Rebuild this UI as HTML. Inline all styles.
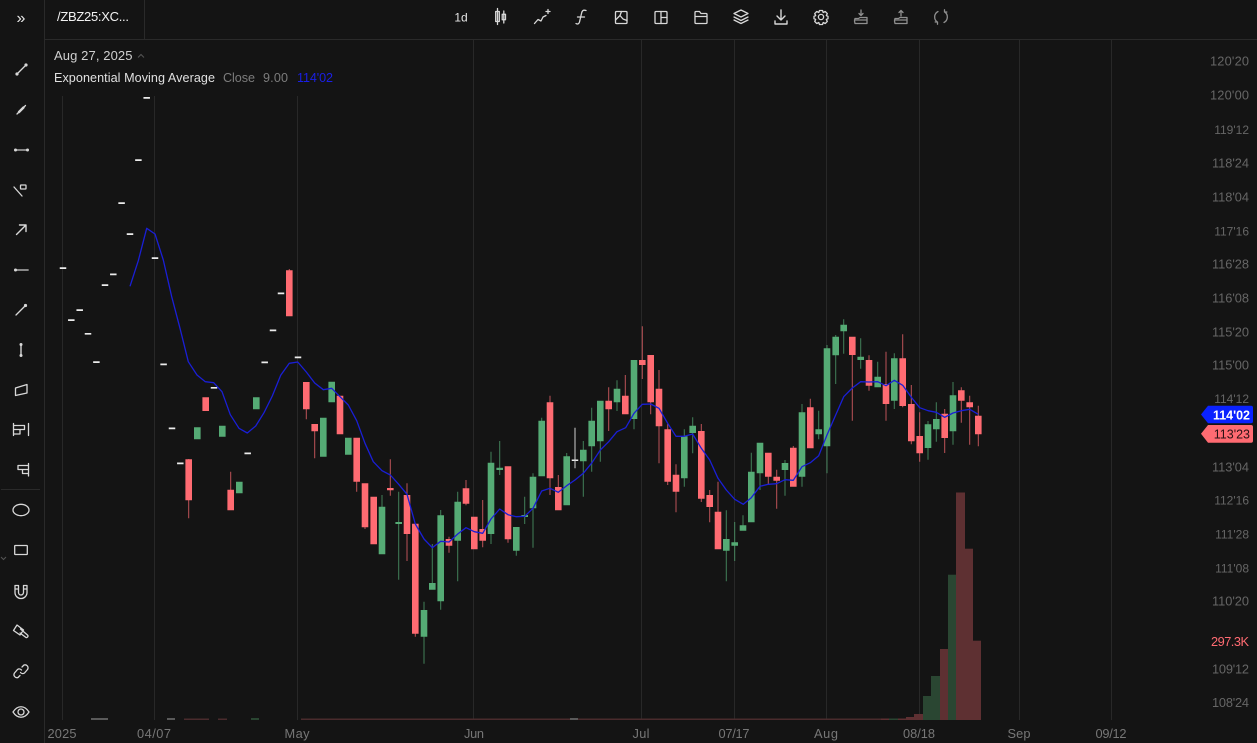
<!DOCTYPE html>
<html lang="en">
<head>
<meta charset="utf-8">
<title>Chart</title>
<style>
html,body{margin:0;padding:0;background:#141414;width:1257px;height:743px;overflow:hidden}
svg{display:block;font-family:"Liberation Sans",sans-serif}
.ax{font-size:12.8px;fill:#666;text-anchor:end}
.ax .n{font-size:12px}
.bx{font-size:12.8px;fill:#777;text-anchor:middle}
.ic{fill:none;stroke:#d8d8d8;stroke-width:1.3;stroke-linecap:round;stroke-linejoin:round}
.dim{stroke:#8f8f8f}
.dot{fill:#d8d8d8;stroke:none}
</style>
</head>
<body>
<svg width="1257" height="743" viewBox="0 0 1257 743" xmlns="http://www.w3.org/2000/svg">
<rect width="1257" height="743" fill="#141414"/>

<!-- frame -->
<path d="M44.5 0V743M44 39.5H1257M144.5 0V39" stroke="#2a2a2a" fill="none"/>
<path d="M1 489.5H40" stroke="#2a2a2a"/>

<!-- grid -->
<path d="M62.5 96V720M154.5 96V720M297.5 96V720M473.5 40V720M641.5 40V720M734.5 40V720M826.5 40V720M919.5 40V720M1019.5 40V720M1111.5 40V720" stroke="#282828" fill="none"/>

<!-- volume -->
<g fill="#5e3032">
<rect x="880" y="718.5" width="9" height="1.5"/><rect x="898" y="718.5" width="8" height="1.5"/><rect x="906" y="717" width="9" height="3"/><rect x="914" y="714" width="9" height="6"/>
<rect x="940" y="649" width="8" height="71"/><rect x="956" y="492.5" width="9" height="227.5"/><rect x="965" y="548.7" width="8" height="171.3"/><rect x="973" y="640.7" width="8" height="79.3"/>
</g>
<g fill="#2a4632">
<rect x="889" y="718.5" width="9" height="1.5"/><rect x="923" y="696" width="8" height="24"/><rect x="931" y="676" width="9" height="44"/><rect x="948" y="574.7" width="8" height="145.3"/>
</g>
<rect x="301" y="718.5" width="580" height="1.5" fill="#4a2b2d"/>
<g fill="#5a5a5a"><rect x="91" y="718" width="17" height="2"/><rect x="167" y="718" width="8" height="2"/><rect x="570" y="718" width="8" height="2"/></g>
<g fill="#4a2b2d"><rect x="184" y="718.5" width="25" height="1.5"/><rect x="218" y="718.5" width="9" height="1.5"/></g>
<g fill="#2a4632"><rect x="251" y="718" width="8" height="2"/></g>

<!-- dashes / doji white -->
<path stroke="#ececec" stroke-width="6.5" fill="none" d="M63 267.3V269M71.3 319.3V321M79.7 309.3V311M88 333V334.6M96.4 361.2V363M105 284.3V286M113.3 273.5V275.2M121.6 202.3V204M130 233.2V235M138.4 159.2V161M146.7 97V98.7M155 257.2V259M163.6 363.5V365.2M172 427.5V429.2M180.3 462.5V464.2M214 387V388.6M247.7 452.5V454.2M264.7 361.5V363.2M273 329.5V331.2M281 292.5V294.2M298 356.5V358.2M575 459.5V461"/>
<path stroke="#d0d0d0" stroke-width="1" fill="none" d="M575 427.7V468.3"/>

<!-- wicks red -->
<path stroke="#ff6b72" stroke-opacity=".72" stroke-width="1" fill="none" d="M188.7 459V518.3M230.7 471.7V510M289.3 269V316M306.3 382V419.3M314.7 424V458.3M356.7 438V491.7M365 484V529M390.3 459.3V495.7M407 483.3V561M415.3 524V636.7M449 536.7V552.7M466 480V505.3M482.7 500V547.3M508 467V542.7M550 395.7V495M558.3 475V510M608.7 387.3V431M625.3 375V414M642.3 326.3V379M650.7 355V414.3M659 370V463.3M667.7 424V485M676 464.3V512.3M701.3 424V502M709.7 490V522.3M718 481.7V549M768.3 453V485M776.7 469.7V508.7M793.3 446V486M810.3 398.7V448M852.3 337V420.7M869 355.3V390.7M886 351.7V420.7M902.7 334.3V407.3M911.3 385V444.3M919.7 412.3V461.7M944.7 409V453M961.3 387.3V422.7M969.7 395.7V444.7M978.3 405.7V446.3"/>
<!-- wicks green -->
<path stroke="#55ab75" stroke-opacity=".72" stroke-width="1" fill="none" d="M382 495V554M398.7 491.7V579.7M424 601.7V663.7M432.3 544V589M440.7 510V609.7M457.7 491.7V581.3M491 451.7V544M499.7 441V475M516.3 527V555.7M524.7 496.7V524M533 473.3V547.7M541.7 417.7V476M566.7 453V505M583.3 441V496.7M591.7 407.7V471.7M600.3 401V461.7M617 380.3V411M634 360V429.3M684.3 429.3V486.7M692.7 417.3V453.3M726.3 510.3V581.3M734.7 522V561M743 515.3V530M751.3 452.7V522M760 443V490M785 460V495.7M802 404V486.7M818.7 410.7V439.3M827 345V473.3M835.7 335V384M843.7 319.3V353.7M860.7 338.3V368.7M877.7 361.7V387M894.3 353.3V409M928 421V459.7M936.3 402.3V441.7M953 382V444.7"/>

<!-- bodies red -->
<path stroke="#ff6b72" stroke-width="6.6" fill="none" d="M188.7 459.3V500.3M205.7 397.3V411M230.7 489.7V510.3M289.3 270.3V316.3M306.3 382V409.3M314.7 424V431.3M340 395.7V434.3M356.7 437.7V481.7M365 483.3V527.3M373.7 496.7V544.3M390.3 488V490.3M407 495V534M415.3 523.7V633.7M449 539V545.7M466 488.3V503.7M474.3 516.7V549.3M482.7 529V540.7M508 466.3V539.3M550 402.3V478.3M558.3 487V510.3M608.7 400.7V409.3M625.3 395.7V414.3M642.3 360V365M650.7 355V402.3M659 388.7V426.3M667.7 429.3V481.7M676 474.7V491.7M701.3 431V498.7M709.7 495V507M718 511.7V549.3M768.3 452.7V476.7M776.7 476.7V480.7M793.3 447.7V486.7M810.3 407.3V448.3M852.3 336.7V355M869 360V385.7M886 384V404M902.7 358.3V406M911.3 404V441.3M919.7 436V453.3M944.7 413.7V438M961.3 390.3V400.7M969.7 402.3V407.3M978.3 415.7V434.3"/>
<!-- bodies green -->
<path stroke="#55ab75" stroke-width="6.6" fill="none" d="M197.3 427.3V439.3M222.3 425.7V436.7M239.3 481.7V493.3M256.3 397.3V409.3M323.3 417.7V456.7M331.7 381.7V402.3M348.3 437.7V454.7M382 506.7V554.3M398.7 522V524M424 610V636.7M432.3 583V589.7M440.7 515.3V601.3M457.7 501.7V540.7M491 462.7V534M499.7 467.7V470M516.3 527V550.7M524.7 515V517M533 476.7V508.3M541.7 420.7V476.3M566.7 456.3V505.3M583.3 449.7V461.3M591.7 420.7V446.3M600.3 400.7V441.3M617 388.7V402.3M634 360V419M684.3 436.3V478.3M692.7 425.7V433M726.3 539V550.7M734.7 542.3V545.7M743 525.3V530.7M751.3 471.7V522.3M760 442.7V473.3M785 463V470M802 412.3V476.7M818.7 429.3V434.3M827 348.3V446.3M835.7 336.7V355.3M843.7 324.7V331.3M860.7 356.7V360M877.7 376.7V387.3M894.3 358.3V400.7M928 424.3V448M936.3 419V429.3M953 395.3V431.3"/>

<!-- EMA -->
<polyline fill="none" stroke="#1a1fd6" stroke-width="1.3" stroke-linejoin="round" points="130,286.3 138.3,260.7 146.7,228.3 155,234 163.3,260 171.7,296.7 180,328.3 188.3,361.7 197,375 205.3,381.7 213.7,382.7 222,391.7 230.3,414.7 239,428.3 247.3,433 255.7,426 264,412.7 272.3,396 280.7,375.3 289.3,363.3 297.7,362 306.3,372 314.7,383 323.3,389.7 331.7,388.3 340,396.7 348.3,405 356.7,420.7 365,443.3 373.3,461.7 382,470.7 390.3,475 398.7,484.3 407,494.3 415.3,524 424,539 432.3,547.7 440.7,541.3 449,542 457.7,534 466,527.7 474.3,531.7 482.7,533.3 491,519 499.7,509 508,514.7 516.3,516.7 524.7,516.3 533,508.3 541.7,491 550,488.3 558.3,492.3 566.7,485.7 575,480 583.3,473.3 592,462.7 600.3,450 608.7,441.7 617,431.7 625.7,427.7 634,413.3 642.3,404.3 650.7,404 659,408.3 667.7,423.3 676,436.3 684.3,436.3 692.7,434 701.3,448.3 709.7,460 718,478.3 726.3,490 734.7,499.3 743.3,504.3 751.3,497.7 760,486.3 768.3,484.3 776.7,483.7 785,479.7 793.3,480.3 802,466.7 810.3,462.7 818.7,455.7 827,435 835.7,415 843.7,396.7 852.3,388 860.7,381.7 869,382 877.7,381.7 886,385.7 894.3,380.3 902.7,385.3 911.3,397.3 919.7,407.7 928,410.7 936.3,412.3 944.7,417.3 953,413 961.3,410.7 969.7,409.3 978.3,414.3"/>

<!-- right axis -->
<g class="ax">
<text x="1249" y="65.5" textLength="39">120'20</text>
<text x="1249" y="99.5" textLength="39">120'00</text>
<text class="n" x="1249" y="134">119'12</text>
<text x="1249" y="167.5" textLength="37">118'24</text>
<text x="1249" y="201.5" textLength="37">118'04</text>
<text class="n" x="1249" y="235.5">117'16</text>
<text x="1249" y="268.5" textLength="37">116'28</text>
<text x="1249" y="302.5" textLength="37">116'08</text>
<text x="1249" y="336.5" textLength="37">115'20</text>
<text x="1249" y="369.5" textLength="37">115'00</text>
<text class="n" x="1249" y="403">114'12</text>
<text x="1249" y="471.5" textLength="37">113'04</text>
<text class="n" x="1249" y="504.5">112'16</text>
<text class="n" x="1249" y="538.5">111'28</text>
<text class="n" x="1249" y="572.5">111'08</text>
<text x="1249" y="605.5" textLength="37">110'20</text>
<text x="1249" y="673.5" textLength="37">109'12</text>
<text x="1249" y="707" textLength="37">108'24</text>
<text x="1249" y="646" textLength="38" style="fill:#ff6b72">297.3K</text>
</g>

<!-- badges -->
<path d="M1208 405.7H1251a2 2 0 0 1 2 2V421.3a2 2 0 0 1-2 2H1208L1201 414.5Z" fill="#0a22ff"/>
<text x="1250" y="419.5" text-anchor="end" font-size="12.5" font-weight="bold" fill="#fff">114'02</text>
<path d="M1208 425H1251a2 2 0 0 1 2 2V440.7a2 2 0 0 1-2 2H1208L1201 433.8Z" fill="#ff6b72"/>
<text x="1250" y="438.5" text-anchor="end" font-size="12.5" fill="#2a1214">113'23</text>

<!-- bottom axis -->
<g class="bx">
<text x="62" y="738" textLength="29">2025</text>
<text x="154" y="738" textLength="34">04/07</text>
<text x="297" y="738" textLength="25">May</text>
<text x="474" y="738" textLength="20">Jun</text>
<text x="641" y="738" textLength="17">Jul</text>
<text x="734" y="738" textLength="31">07/17</text>
<text x="826" y="738" textLength="24">Aug</text>
<text x="919" y="738" textLength="32">08/18</text>
<text x="1019" y="738" textLength="23">Sep</text>
<text x="1111" y="738" textLength="31">09/12</text>
</g>

<!-- top left text -->
<text x="57" y="21" font-size="13" fill="#f2f2f2" textLength="72">/ZBZ25:XC...</text>
<text x="54" y="60" font-size="13" fill="#d0d0d0" textLength="78.5">Aug 27, 2025</text>
<path d="M138 57.5L141 54.5L144 57.5" fill="none" stroke="#555" stroke-width="1"/>
<text x="54" y="82" font-size="12.6" fill="#e0e0e0" textLength="161">Exponential Moving Average</text>
<text x="223" y="82" font-size="12.6" fill="#7c7c7c" textLength="32">Close</text>
<text x="263" y="82" font-size="12.6" fill="#7c7c7c" textLength="25">9.00</text>
<text x="297" y="82" font-size="12.6" fill="#1a1fe6" textLength="36">114'02</text>

<!-- top toolbar -->
<text x="461" y="21.5" font-size="12" fill="#e6e6e6" text-anchor="middle">1d</text>
<g class="ic">
<path d="M497.5 8.5V24.5M495.7 11.5H499.3V21.5H495.7ZM503.8 11V23M502.2 14.3H505.5V19.7H502.2Z"/>
<path d="M534.5 23.5L538 19.5L541 21L543 17L546 15.5M546 11.5H550M548 9.5V13.5"/>
<path d="M586 10.5C583 9.5 582 11 581.5 13.5L579.5 22C579 24 577.5 24.5 576 23.5M577.5 17H584.5"/>
<rect x="615.5" y="11.5" width="11.5" height="12" rx="1"/>
<path d="M615.5 20L620 15.5L623 19L627 20.5M621.5 11.5L620 15.5"/>
<rect x="655" y="11.5" width="12" height="12" rx="1"/>
<path d="M661 11.5V23.5M661 17.5H667"/>
<path d="M695 13V22.5A1 1 0 0 0 696 23.5H706A1 1 0 0 0 707 22.5V14.5A1 1 0 0 0 706 13.5H701L699.5 11.5H696A1 1 0 0 0 695 12.5ZM695 16.5H707"/>
<path d="M741 10L748 13.5L741 17L734 13.5ZM734 17L741 20.5L748 17M734 20L741 23.5L748 20"/>
<path d="M781 10V20M777 16L781 20L785 16M775 21V24H787V21" stroke-width="1.4"/>
<circle cx="821" cy="17" r="2.6"/>
<path d="M819.5 10.5H822.5L823.2 12.5L825.2 11.5L827.3 13.6L826.3 15.6L828 16.3V18.7L826.3 19.4L827.3 21.4L825.2 23.5L823.2 22.5L822.5 24.5H819.5L818.8 22.5L816.8 23.5L814.7 21.4L815.7 19.4L814 18.7V16.3L815.7 15.6L814.7 13.6L816.8 11.5L818.8 12.5Z"/>
</g>
<g class="ic dim">
<path d="M861 10V15.5M859 13.5L861 15.5L863 13.5M855 23.5H867V17.5H860L858.5 18.5H855M855 18.5L854.5 21L855 23.5M854.5 20H867"/>
<path d="M901 16V10.5M899 12.5L901 10.5L903 12.5M895 23.5H907V17.5H900L898.5 18.5H895M895 18.5L894.5 21L895 23.5M894.5 20H907"/>
<path d="M938 11.5A6.2 6.2 0 0 0 937.5 22.2M944 22.5A6.2 6.2 0 0 0 944.5 11.8M944.5 9.8V12H946.8M937.5 24.2V22H935.2"/>
</g>

<!-- left toolbar -->
<text x="21" y="23" font-size="16" fill="#e6e6e6" text-anchor="middle">»</text>
<g class="ic">
<path d="M17 74L26 65"/>
<path d="M17 114L25.5 105.5"/><path d="M19 112L23.5 107.5" stroke-width="2.4"/>
<path d="M15 150H27.5" stroke-width="1.5" stroke="#aaa"/>
<path d="M14 187L22 196"/><rect x="20.5" y="185" width="5.5" height="4" rx=".5"/>
<path d="M16.5 234.5L25.5 225.5M19.5 225H26V231.5" stroke-width="1.4"/>
<path d="M15 270H28" stroke-width="1.8" stroke="#999"/>
<path d="M16 315L25 306"/>
<path d="M21 345V355" stroke-width="1.8" stroke="#aaa"/>
<path d="M15.5 388V395.5L27 393V384.5Z"/>
<path d="M13.5 423.5V435.5M28.5 423.5V435.5M13.5 425.5H24.5V429.5H13.5M13.5 429.5H20V434H13.5"/>
<path d="M28.5 463.5V476M18 465.5H28.5V469.5H18ZM22.5 469.5V473.5H28.5"/>
<ellipse cx="21" cy="510" rx="8" ry="5.7"/>
<rect x="14.7" y="545.5" width="12.6" height="9" rx=".5"/>
<path d="M15 585.5H18.5V592.5A2.5 2.5 0 0 0 23.5 592.5V585.5H27V592.5A6 6 0 0 1 15 592.5ZM15 589H18.5M23.5 589H27"/>
<path d="M17 625L13.5 630.5L20 635L23.5 630ZM20.5 629L27.5 635A1.5 1.5 0 0 1 26 637.5L20 633"/>
<path d="M22 667L24 665A3 3 0 0 1 27.5 669.5L24.5 673A3 3 0 0 1 20.5 672.5M20 675.5L18 677.5A3 3 0 0 1 14.5 673L17.5 669.5A3 3 0 0 1 21.5 670"/>
<path d="M13 712C17.5 705 24.5 705 29 712C24.5 719 17.5 719 13 712Z"/>
<circle cx="21" cy="712" r="3"/>
</g>
<g class="dot">
<circle cx="17" cy="74" r="1.6"/><circle cx="26" cy="65" r="1.6"/>
<circle cx="15.5" cy="150" r="1.5"/><circle cx="27.5" cy="150" r="1.5"/>
<circle cx="15.5" cy="270" r="1.5"/>
<circle cx="25.5" cy="305.5" r="1.6"/>
<circle cx="21" cy="344.5" r="1.5"/><circle cx="21" cy="355.5" r="1.5"/>
</g>
<path d="M1 557L3.5 559.5L6 557" fill="none" stroke="#555" stroke-width="1"/>
</svg>
</body>
</html>
